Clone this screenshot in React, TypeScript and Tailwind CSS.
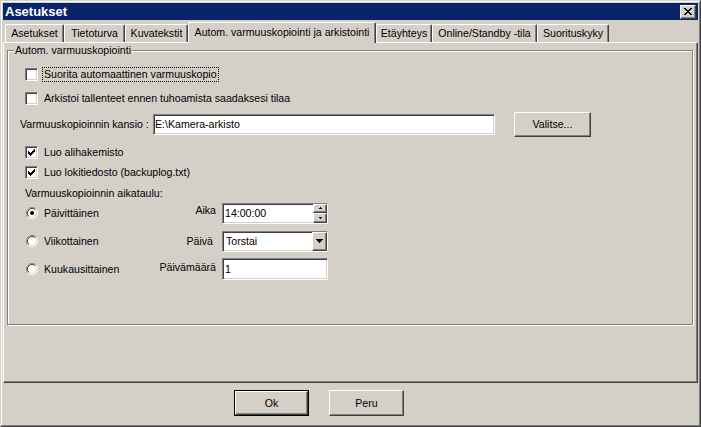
import React from 'react';

const font = "font-['Liberation_Sans',Arial,sans-serif]";

const raised =
  'bg-[#d4d0c8] border border-t-white border-l-white border-r-[#404040] border-b-[#404040] shadow-[inset_-1px_-1px_0_#808080]';
const sunken =
  'bg-white border border-t-[#808080] border-l-[#808080] border-r-white border-b-white shadow-[inset_1px_1px_0_#404040,inset_-1px_-1px_0_#d4d0c8]';

const CheckBox = ({ checked }: { checked?: boolean }) => (
  <span className={`flex-none block w-[13px] h-[13px] ${sunken}`}>
    {checked && (
      <svg width="11" height="11" viewBox="1 1 11 11" shapeRendering="crispEdges" className="block">
        <path
          d="M3 5h1v3H3zM4 6h1v3H4zM5 7h1v3H5zM6 6h1v3H6zM7 5h1v3H7zM8 4h1v3H8zM9 3h1v3H9z"
          fill="#000"
        />
      </svg>
    )}
  </span>
);

const Radio = ({ checked }: { checked?: boolean }) => (
  <svg width="12" height="12" viewBox="0 0 12 12" className="flex-none block">
    <circle cx="6" cy="6" r="5.5" fill="#fff" />
    <path d="M2.11 9.89A5.5 5.5 0 0 1 9.89 2.11" fill="none" stroke="#808080" />
    <path d="M9.89 2.11A5.5 5.5 0 0 1 2.11 9.89" fill="none" stroke="#ffffff" />
    <path d="M2.82 9.18A4.5 4.5 0 0 1 9.18 2.82" fill="none" stroke="#404040" />
    <path d="M9.18 2.82A4.5 4.5 0 0 1 2.82 9.18" fill="none" stroke="#d4d0c8" />
    {checked && <circle cx="6" cy="6" r="2" fill="#000" />}
  </svg>
);

const Tab = ({ label, width, active }: { label: string; width: string; active?: boolean }) =>
  active ? (
    <div
      className={`${width} relative z-10 -mb-px h-[21px] flex items-center justify-center pb-[2px] bg-[#d4d0c8] border-t border-l border-r border-t-white border-l-white border-r-[#404040] shadow-[inset_-1px_0_0_#808080] rounded-t-[2px] whitespace-nowrap`}
    >
      {label}
    </div>
  ) : (
    <div
      className={`${width} h-[18px] flex items-center justify-center border-t border-l border-r border-t-white border-l-white border-r-[#404040] shadow-[inset_-1px_0_0_#808080] rounded-t-[2px] whitespace-nowrap`}
    >
      {label}
    </div>
  );

const tabs = [
  { label: 'Asetukset', width: 'w-[59px]' },
  { label: 'Tietoturva', width: 'w-[61px]' },
  { label: 'Kuvatekstit', width: 'w-[63px]' },
  { label: 'Autom. varmuuskopiointi ja arkistointi', width: 'w-[188px]', active: true },
  { label: 'Etäyhteys', width: 'w-[56px]' },
  { label: 'Online/Standby -tila', width: 'w-[105px]' },
  { label: 'Suorituskyky', width: 'w-[72px]' },
];

export default function App() {
  return (
    <div
      className={`w-[701px] h-[427px] bg-[#d4d0c8] border border-t-[#d4d0c8] border-l-[#d4d0c8] border-r-[#404040] border-b-[#404040] text-[10.6px] leading-[13px] text-black ${font}`}
    >
      <div className="h-full flex flex-col border border-t-white border-l-white border-r-[#808080] border-b-[#808080] p-px">
        {/* title bar */}
        <div className="flex-none h-[17px] bg-[#0a246a] flex items-center justify-between pl-[2px] pr-[2px]">
          <span className="text-white font-bold text-[13px] leading-[16px]">Asetukset</span>
          <span className={`w-[16px] h-[14px] flex items-center justify-center ${raised}`}>
            <svg width="8" height="7" viewBox="0 0 8 7" shapeRendering="crispEdges">
              <path
                d="M0 0h2v1H0zM6 0h2v1H6zM1 1h2v1H1zM5 1h2v1H5zM2 2h4v1H2zM3 3h2v1H3zM2 4h4v1H2zM1 5h2v1H1zM5 5h2v1H5zM0 6h2v1H0zM6 6h2v1H6z"
                fill="#000"
              />
            </svg>
          </span>
        </div>

        {/* tabs */}
        <div className="flex-none h-[20px] mt-[2px] flex items-end pl-[2px]">
          {tabs.map((t) => (
            <Tab key={t.label} label={t.label} width={t.width} active={t.active} />
          ))}
        </div>

        {/* panel */}
        <div className="flex-none h-[341px] border border-t-white border-l-white border-r-[#404040] border-b-[#404040] shadow-[inset_-1px_-1px_0_#808080] pl-[3px] pt-[7px]">
          <div className="relative w-[686px] h-[275px] border border-[#808080] shadow-[inset_1px_1px_0_#fff,1px_1px_0_#fff] flex flex-col">
            <span className="absolute left-[6px] -top-[7px] px-px bg-[#d4d0c8] leading-[13px]">
              Autom. varmuuskopiointi
            </span>

            <div className="flex items-center h-[20px] mt-[13px] pl-[17px]">
              <CheckBox />
              <span className="ml-[4px] border border-dotted border-black px-px leading-[13px]">
                Suorita automaattinen varmuuskopio
              </span>
            </div>

            <div className="flex items-center h-[20px] mt-[4px] pl-[17px]">
              <CheckBox />
              <span className="ml-[6px]">Arkistoi tallenteet ennen tuhoamista saadaksesi tilaa</span>
            </div>

            <div className="flex items-center h-[26px] mt-[3px] pl-[12px]">
              <span className="w-[133px] whitespace-nowrap">Varmuuskopioinnin kansio :</span>
              <div className={`w-[342px] h-[21px] flex items-center pl-px ${sunken}`}>E:\Kamera-arkisto</div>
              <div className={`ml-[19px] w-[77px] h-[25px] flex items-center justify-center ${raised}`}>Valitse...</div>
            </div>

            <div className="flex items-center h-[20px] mt-[5px] pl-[17px]">
              <CheckBox checked />
              <span className="ml-[6px]">Luo alihakemisto</span>
            </div>

            <div className="flex items-center h-[20px] pl-[17px]">
              <CheckBox checked />
              <span className="ml-[6px]">Luo lokitiedosto (backuplog.txt)</span>
            </div>

            <div className="h-[11px] leading-[11px] mt-[6px] pl-[17px]">Varmuuskopioinnin aikataulu:</div>

            <div className="flex items-center h-[28px] pl-[18px]">
              <div className="w-[120px] flex items-center">
                <Radio checked />
                <span className="ml-[6px]">Päivittäinen</span>
              </div>
              <span className="w-[70px] text-right mb-[5px]">Aika</span>
              <div className={`ml-[6px] w-[106px] h-[21px] flex items-stretch ${sunken}`}>
                <span className="flex-1 flex items-center pl-[2px]">14:00:00</span>
                <div className="w-[14px] flex flex-col">
                  <span className={`flex-1 flex items-center justify-center ${raised}`}>
                    <svg width="3" height="2" viewBox="0 0 3 2" shapeRendering="crispEdges">
                      <path d="M1 0h1v1h1v1H0V1h1z" fill="#000" />
                    </svg>
                  </span>
                  <span className={`flex-1 flex items-center justify-center ${raised}`}>
                    <svg width="3" height="2" viewBox="0 0 3 2" shapeRendering="crispEdges">
                      <path d="M0 0h3v1H2v1H1V1H0z" fill="#000" />
                    </svg>
                  </span>
                </div>
              </div>
            </div>

            <div className="flex items-center h-[28px] pl-[18px]">
              <div className="w-[120px] flex items-center">
                <Radio />
                <span className="ml-[6px]">Viikottainen</span>
              </div>
              <span className="w-[70px] text-right pr-[3px]">Päivä</span>
              <div className={`ml-[6px] w-[106px] h-[21px] flex items-stretch ${sunken}`}>
                <span className="flex-1 flex items-center pl-[3px]">Torstai</span>
                <span className={`w-[15px] flex items-center justify-center ${raised}`}>
                  <svg width="7" height="4" viewBox="0 0 7 4" shapeRendering="crispEdges">
                    <path d="M0 0h7v1H6v1H5v1H4v1H3V3H2V2H1V1H0z" fill="#000" />
                  </svg>
                </span>
              </div>
            </div>

            <div className="flex items-center h-[28px] pl-[18px]">
              <div className="w-[120px] flex items-center">
                <Radio />
                <span className="ml-[6px]">Kuukausittainen</span>
              </div>
              <span className="w-[70px] text-right mb-[3px]">Päivämäärä</span>
              <div className={`ml-[6px] w-[106px] h-[22px] flex items-center pl-[2px] ${sunken}`}>1</div>
            </div>
          </div>
        </div>

        {/* dialog buttons */}
        <div className="flex-none flex gap-[20px] pl-[231px] mt-[7px]">
          <div className="w-[75px] h-[26px] border border-black">
            <div className={`h-full flex items-center justify-center ${raised}`}>Ok</div>
          </div>
          <div className={`w-[75px] h-[26px] flex items-center justify-center ${raised}`}>Peru</div>
        </div>
      </div>
    </div>
  );
}
